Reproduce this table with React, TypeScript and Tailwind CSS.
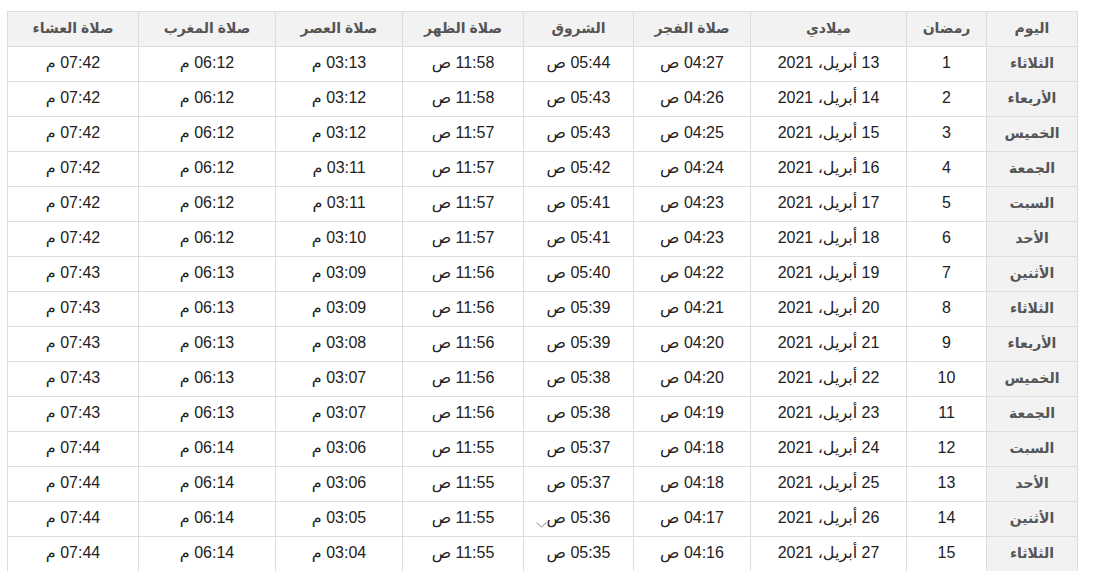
import React from 'react';

type Row = {
  day: string;
  ramadan: number;
  date: string;
  fajr: string;
  shuruq: string;
  dhuhr: string;
  asr: string;
  maghrib: string;
  isha: string;
};

const rows: Row[] = [
  { day: 'الثلاثاء', ramadan: 1, date: '13 أبريل، 2021', fajr: '04:27 ص', shuruq: '05:44 ص', dhuhr: '11:58 ص', asr: '03:13 م', maghrib: '06:12 م', isha: '07:42 م' },
  { day: 'الأربعاء', ramadan: 2, date: '14 أبريل، 2021', fajr: '04:26 ص', shuruq: '05:43 ص', dhuhr: '11:58 ص', asr: '03:12 م', maghrib: '06:12 م', isha: '07:42 م' },
  { day: 'الخميس', ramadan: 3, date: '15 أبريل، 2021', fajr: '04:25 ص', shuruq: '05:43 ص', dhuhr: '11:57 ص', asr: '03:12 م', maghrib: '06:12 م', isha: '07:42 م' },
  { day: 'الجمعة', ramadan: 4, date: '16 أبريل، 2021', fajr: '04:24 ص', shuruq: '05:42 ص', dhuhr: '11:57 ص', asr: '03:11 م', maghrib: '06:12 م', isha: '07:42 م' },
  { day: 'السبت', ramadan: 5, date: '17 أبريل، 2021', fajr: '04:23 ص', shuruq: '05:41 ص', dhuhr: '11:57 ص', asr: '03:11 م', maghrib: '06:12 م', isha: '07:42 م' },
  { day: 'الأحد', ramadan: 6, date: '18 أبريل، 2021', fajr: '04:23 ص', shuruq: '05:41 ص', dhuhr: '11:57 ص', asr: '03:10 م', maghrib: '06:12 م', isha: '07:42 م' },
  { day: 'الأثنين', ramadan: 7, date: '19 أبريل، 2021', fajr: '04:22 ص', shuruq: '05:40 ص', dhuhr: '11:56 ص', asr: '03:09 م', maghrib: '06:13 م', isha: '07:43 م' },
  { day: 'الثلاثاء', ramadan: 8, date: '20 أبريل، 2021', fajr: '04:21 ص', shuruq: '05:39 ص', dhuhr: '11:56 ص', asr: '03:09 م', maghrib: '06:13 م', isha: '07:43 م' },
  { day: 'الأربعاء', ramadan: 9, date: '21 أبريل، 2021', fajr: '04:20 ص', shuruq: '05:39 ص', dhuhr: '11:56 ص', asr: '03:08 م', maghrib: '06:13 م', isha: '07:43 م' },
  { day: 'الخميس', ramadan: 10, date: '22 أبريل، 2021', fajr: '04:20 ص', shuruq: '05:38 ص', dhuhr: '11:56 ص', asr: '03:07 م', maghrib: '06:13 م', isha: '07:43 م' },
  { day: 'الجمعة', ramadan: 11, date: '23 أبريل، 2021', fajr: '04:19 ص', shuruq: '05:38 ص', dhuhr: '11:56 ص', asr: '03:07 م', maghrib: '06:13 م', isha: '07:43 م' },
  { day: 'السبت', ramadan: 12, date: '24 أبريل، 2021', fajr: '04:18 ص', shuruq: '05:37 ص', dhuhr: '11:55 ص', asr: '03:06 م', maghrib: '06:14 م', isha: '07:44 م' },
  { day: 'الأحد', ramadan: 13, date: '25 أبريل، 2021', fajr: '04:18 ص', shuruq: '05:37 ص', dhuhr: '11:55 ص', asr: '03:06 م', maghrib: '06:14 م', isha: '07:44 م' },
  { day: 'الأثنين', ramadan: 14, date: '26 أبريل، 2021', fajr: '04:17 ص', shuruq: '05:36 ص', dhuhr: '11:55 ص', asr: '03:05 م', maghrib: '06:14 م', isha: '07:44 م' },
  { day: 'الثلاثاء', ramadan: 15, date: '27 أبريل، 2021', fajr: '04:16 ص', shuruq: '05:35 ص', dhuhr: '11:55 ص', asr: '03:04 م', maghrib: '06:14 م', isha: '07:44 م' },
];

const headers = ['اليوم', 'رمضان', 'ميلادي', 'صلاة الفجر', 'الشروق', 'صلاة الظهر', 'صلاة العصر', 'صلاة المغرب', 'صلاة العشاء'];

const th = 'h-[35px] border border-[#dddddd] bg-[#f2f2f2] p-0 pb-[2px] text-center align-middle text-[14px] font-bold text-[#555555]';
const td = 'h-[35px] border border-[#dddddd] p-0 pb-[2px] text-center align-middle text-[16px] text-[#222222]';

const App: React.FC = () => {
  return (
    <div className="min-h-[571px] bg-white pl-[7px] pt-[11px]" style={{ fontFamily: '"Liberation Sans", "DejaVu Sans", Arial, sans-serif' }}>
      <table dir="rtl" className="w-[1070px] table-fixed border-collapse">
        <colgroup>
          <col className="w-[91px]" />
          <col className="w-[80px]" />
          <col className="w-[156px]" />
          <col className="w-[117px]" />
          <col className="w-[110px]" />
          <col className="w-[121px]" />
          <col className="w-[127px]" />
          <col className="w-[137px]" />
          <col className="w-[131px]" />
        </colgroup>
        <thead>
          <tr>
            {headers.map(h => (
              <th key={h} className={th}>{h}</th>
            ))}
          </tr>
        </thead>
        <tbody>
          {rows.map(r => (
            <tr key={r.ramadan}>
              <td className={`${td} bg-[#f2f2f2] !text-[14px] font-bold !text-[#555555]`}>{r.day}</td>
              <td className={td}>{r.ramadan}</td>
              <td className={td}>{r.date}</td>
              <td className={td}>{r.fajr}</td>
              <td className={`${td} relative`}>
                {r.shuruq}
                {r.ramadan === 14 && (
                  <svg className="absolute left-[12px] top-[20px]" width="11" height="6" viewBox="0 0 11 6" fill="none">
                    <path d="M0.5 0.5 L5.5 5 L10.5 0.5" stroke="#8a8a8a" strokeWidth="1" />
                  </svg>
                )}
              </td>
              <td className={td}>{r.dhuhr}</td>
              <td className={td}>{r.asr}</td>
              <td className={td}>{r.maghrib}</td>
              <td className={td}>{r.isha}</td>
            </tr>
          ))}
        </tbody>
      </table>
    </div>
  );
};

export default App;
